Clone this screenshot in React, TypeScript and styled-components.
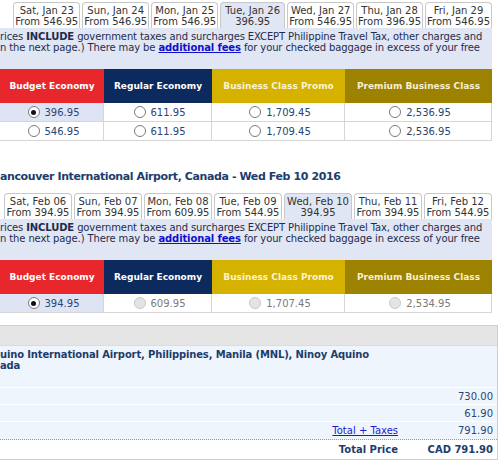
import { FC } from 'react'
import styled, { createGlobalStyle } from 'styled-components'

const GlobalStyle = createGlobalStyle`
    html, body {
        margin: 0;
        padding: 0;
        background: #fff;
        overflow: hidden;
    }
    body {
        font-family: "DejaVu Sans", Verdana, sans-serif;
        font-size: 10px;
        color: #1e2d4d;
    }
`

type DayTab = { day: string; price: string; active?: boolean }

const janTabs: DayTab[] = [
    { day: 'Sat, Jan 23', price: 'From 546.95' },
    { day: 'Sun, Jan 24', price: 'From 546.95' },
    { day: 'Mon, Jan 25', price: 'From 546.95' },
    { day: 'Tue, Jan 26', price: '396.95', active: true },
    { day: 'Wed, Jan 27', price: 'From 546.95' },
    { day: 'Thu, Jan 28', price: 'From 396.95' },
    { day: 'Fri, Jan 29', price: 'From 546.95' },
]

const febTabs: DayTab[] = [
    { day: 'Sat, Feb 06', price: 'From 394.95' },
    { day: 'Sun, Feb 07', price: 'From 394.95' },
    { day: 'Mon, Feb 08', price: 'From 609.95' },
    { day: 'Tue, Feb 09', price: 'From 544.95' },
    { day: 'Wed, Feb 10', price: '394.95', active: true },
    { day: 'Thu, Feb 11', price: 'From 394.95' },
    { day: 'Fri, Feb 12', price: 'From 544.95' },
]

const classes = [
    { name: 'Budget Economy', bg: '#e8272c', color: '#fff' },
    { name: 'Regular Economy', bg: '#0c2a5e', color: '#fff' },
    { name: 'Business Class Promo', bg: '#d5b100', color: '#fbf3d2' },
    { name: 'Premium Business Class', bg: '#9d8100', color: '#f6efd2' },
]

type Fare = { price: string; checked?: boolean; disabled?: boolean }

const janFares: Fare[][] = [
    [{ price: '396.95', checked: true }, { price: '611.95' }, { price: '1,709.45' }, { price: '2,536.95' }],
    [{ price: '546.95' }, { price: '611.95' }, { price: '1,709.45' }, { price: '2,536.95' }],
]

const febFares: Fare[][] = [
    [
        { price: '394.95', checked: true },
        { price: '609.95', disabled: true },
        { price: '1,707.45', disabled: true },
        { price: '2,534.95', disabled: true },
    ],
]

const DateTabs: FC<{ tabs: DayTab[]; minWidth: number }> = ({ tabs, minWidth }) => (
    <TabRow>
        {tabs.map(t => (
            <Tab key={t.day} $active={t.active} $minWidth={minWidth}>
                <div>{t.day}</div>
                <div>{t.price}</div>
            </Tab>
        ))}
    </TabRow>
)

const Notice: FC = () => (
    <InfoPanel>
        <InfoLine>
            rices <b>INCLUDE</b> government taxes and surcharges EXCEPT Philippine Travel Tax, other charges and
        </InfoLine>
        <InfoLine>
            n the next page.) There may be <FeeLink href="#">additional fees</FeeLink> for your checked baggage in excess of your free
        </InfoLine>
    </InfoPanel>
)

const FareTable: FC<{ rows: Fare[][] }> = ({ rows }) => (
    <Grid>
        {classes.map(c => (
            <HeadCell key={c.name} $bg={c.bg} $color={c.color}>{c.name}</HeadCell>
        ))}
        {rows.map((row, i) =>
            row.map((f, j) => (
                <FareCell key={`${i}-${j}`} $selected={f.checked}>
                    <Radio $checked={f.checked} $disabled={f.disabled} />
                    <Price $disabled={f.disabled}>{f.price}</Price>
                </FareCell>
            ))
        )}
    </Grid>
)

const App: FC = () => {
    return (
        <Page>
            <GlobalStyle />
            <DateTabs tabs={janTabs} minWidth={65} />
            <Notice />
            <FareTable rows={janFares} />

            <Heading>ancouver International Airport, Canada - Wed Feb 10 2016</Heading>
            <DateTabs tabs={febTabs} minWidth={68} />
            <Notice />
            <FareTable rows={febFares} />

            <Summary>
                <SummaryBar />
                <RouteBlock>
                    <RouteTitle>
                        uino International Airport, Philippines, Manila (MNL), Ninoy Aquino<br />ada
                    </RouteTitle>
                    <CostRow>
                        <CostLabel />
                        <CostValue>730.00</CostValue>
                    </CostRow>
                    <CostRow>
                        <CostLabel />
                        <CostValue>61.90</CostValue>
                    </CostRow>
                    <CostRow $last>
                        <CostLabel><TaxLink href="#">Total + Taxes</TaxLink></CostLabel>
                        <CostValue>791.90</CostValue>
                    </CostRow>
                </RouteBlock>
                <TotalRow>
                    <CostLabel>Total Price</CostLabel>
                    <CostValue>CAD 791.90</CostValue>
                </TotalRow>
            </Summary>
        </Page>
    )
}

const Page = styled.div`
    width: 500px;
    padding-top: 2px;
`
Page.displayName = 'Page'

const TabRow = styled.div`
    display: flex;
    justify-content: flex-end;
    align-items: flex-end;
    gap: 2px;
    padding-right: 8px;
    height: 26px;
`
TabRow.displayName = 'TabRow'

const Tab = styled.div<{ $active?: boolean; $minWidth: number }>`
    min-width: ${p => p.$minWidth}px;
    height: 26px;
    box-sizing: border-box;
    padding: 2px 1px 0;
    border: 1px solid #c8c8c8;
    border-bottom: none;
    border-radius: 4px 4px 0 0;
    background: ${p => (p.$active ? '#e1e6f4' : '#fff')};
    color: #333;
    line-height: 11px;
    text-align: center;
    white-space: nowrap;
`
Tab.displayName = 'Tab'

const InfoPanel = styled.div`
    margin-right: 8px;
    height: 41px;
    box-sizing: border-box;
    padding-top: 3px;
    background: #e1e6f4;
    line-height: 11px;
    letter-spacing: -0.12px;
    white-space: nowrap;
    overflow: hidden;
`
InfoPanel.displayName = 'InfoPanel'

const InfoLine = styled.div``
InfoLine.displayName = 'InfoLine'

const FeeLink = styled.a`
    color: #1010cc;
    font-weight: bold;
    text-decoration: underline;
`
FeeLink.displayName = 'FeeLink'

const Grid = styled.div`
    display: grid;
    grid-template-columns: 104px 108px 133px 147px;
    grid-auto-rows: 19px;
    grid-template-rows: 34px;
    width: 492px;
`
Grid.displayName = 'Grid'

const HeadCell = styled.div<{ $bg: string; $color: string }>`
    display: flex;
    align-items: center;
    justify-content: center;
    background: ${p => p.$bg};
    color: ${p => p.$color};
    font-size: 9px;
    font-weight: bold;
    white-space: nowrap;
`
HeadCell.displayName = 'HeadCell'

const FareCell = styled.div<{ $selected?: boolean }>`
    display: flex;
    align-items: center;
    justify-content: center;
    gap: 5px;
    padding-left: 4px;
    background: ${p => (p.$selected ? '#dfe4f4' : '#fff')};
    border-right: 1px solid #d6d6d6;
    border-bottom: 1px solid #d6d6d6;
`
FareCell.displayName = 'FareCell'

const Radio = styled.span<{ $checked?: boolean; $disabled?: boolean }>`
    position: relative;
    width: 12px;
    height: 12px;
    box-sizing: border-box;
    border-radius: 50%;
    border: 1px solid ${p => (p.$disabled ? '#c8c8c8' : '#7a7a7a')};
    background: ${p => (p.$disabled ? '#e4e4e4' : '#fff')};
    flex-shrink: 0;
    &::after {
        content: '';
        display: ${p => (p.$checked ? 'block' : 'none')};
        position: absolute;
        left: 2.5px;
        top: 2.5px;
        width: 5px;
        height: 5px;
        border-radius: 50%;
        background: #111;
    }
`
Radio.displayName = 'Radio'

const Price = styled.span<{ $disabled?: boolean }>`
    color: ${p => (p.$disabled ? '#7a7a7a' : '#2a4572')};
`
Price.displayName = 'Price'

const Heading = styled.h2`
    margin: 28px 0 9px;
    font-size: 11px;
    line-height: 15px;
    letter-spacing: -0.4px;
    font-weight: bold;
    color: #1d3d6c;
    white-space: nowrap;
`
Heading.displayName = 'Heading'

const Summary = styled.div`
    margin-top: 12px;
    width: 497px;
    border-top: 1px solid #cfcfcf;
    border-right: 1px solid #cfcfcf;
    border-bottom: 1px solid #cfcfcf;
`
Summary.displayName = 'Summary'

const SummaryBar = styled.div`
    height: 19px;
    background: #e5e5e5;
    border-bottom: 1px solid #dcdcdc;
`
SummaryBar.displayName = 'SummaryBar'

const RouteBlock = styled.div`
    background: #eff5fd;
    border-bottom: 1px dotted #9a9a9a;
`
RouteBlock.displayName = 'RouteBlock'

const RouteTitle = styled.div`
    height: 42px;
    box-sizing: border-box;
    padding-top: 3px;
    font-weight: bold;
    line-height: 11px;
    letter-spacing: -0.15px;
    color: #1d3d6c;
    white-space: nowrap;
    border-bottom: 1px solid #fff;
`
RouteTitle.displayName = 'RouteTitle'

const CostRow = styled.div<{ $last?: boolean }>`
    display: flex;
    align-items: center;
    height: 17px;
    box-sizing: border-box;
    border-bottom: ${p => (p.$last ? 'none' : '1px solid #fff')};
    color: #2a4572;
`
CostRow.displayName = 'CostRow'

const CostLabel = styled.div`
    width: 398px;
    text-align: right;
`
CostLabel.displayName = 'CostLabel'

const CostValue = styled.div`
    flex: 1;
    text-align: right;
    padding-right: 4px;
`
CostValue.displayName = 'CostValue'

const TaxLink = styled.a`
    color: #1a1ad0;
    text-decoration: underline;
`
TaxLink.displayName = 'TaxLink'

const TotalRow = styled.div`
    display: flex;
    align-items: center;
    height: 19px;
    font-weight: bold;
    color: #1d3d6c;
`
TotalRow.displayName = 'TotalRow'

export default App
